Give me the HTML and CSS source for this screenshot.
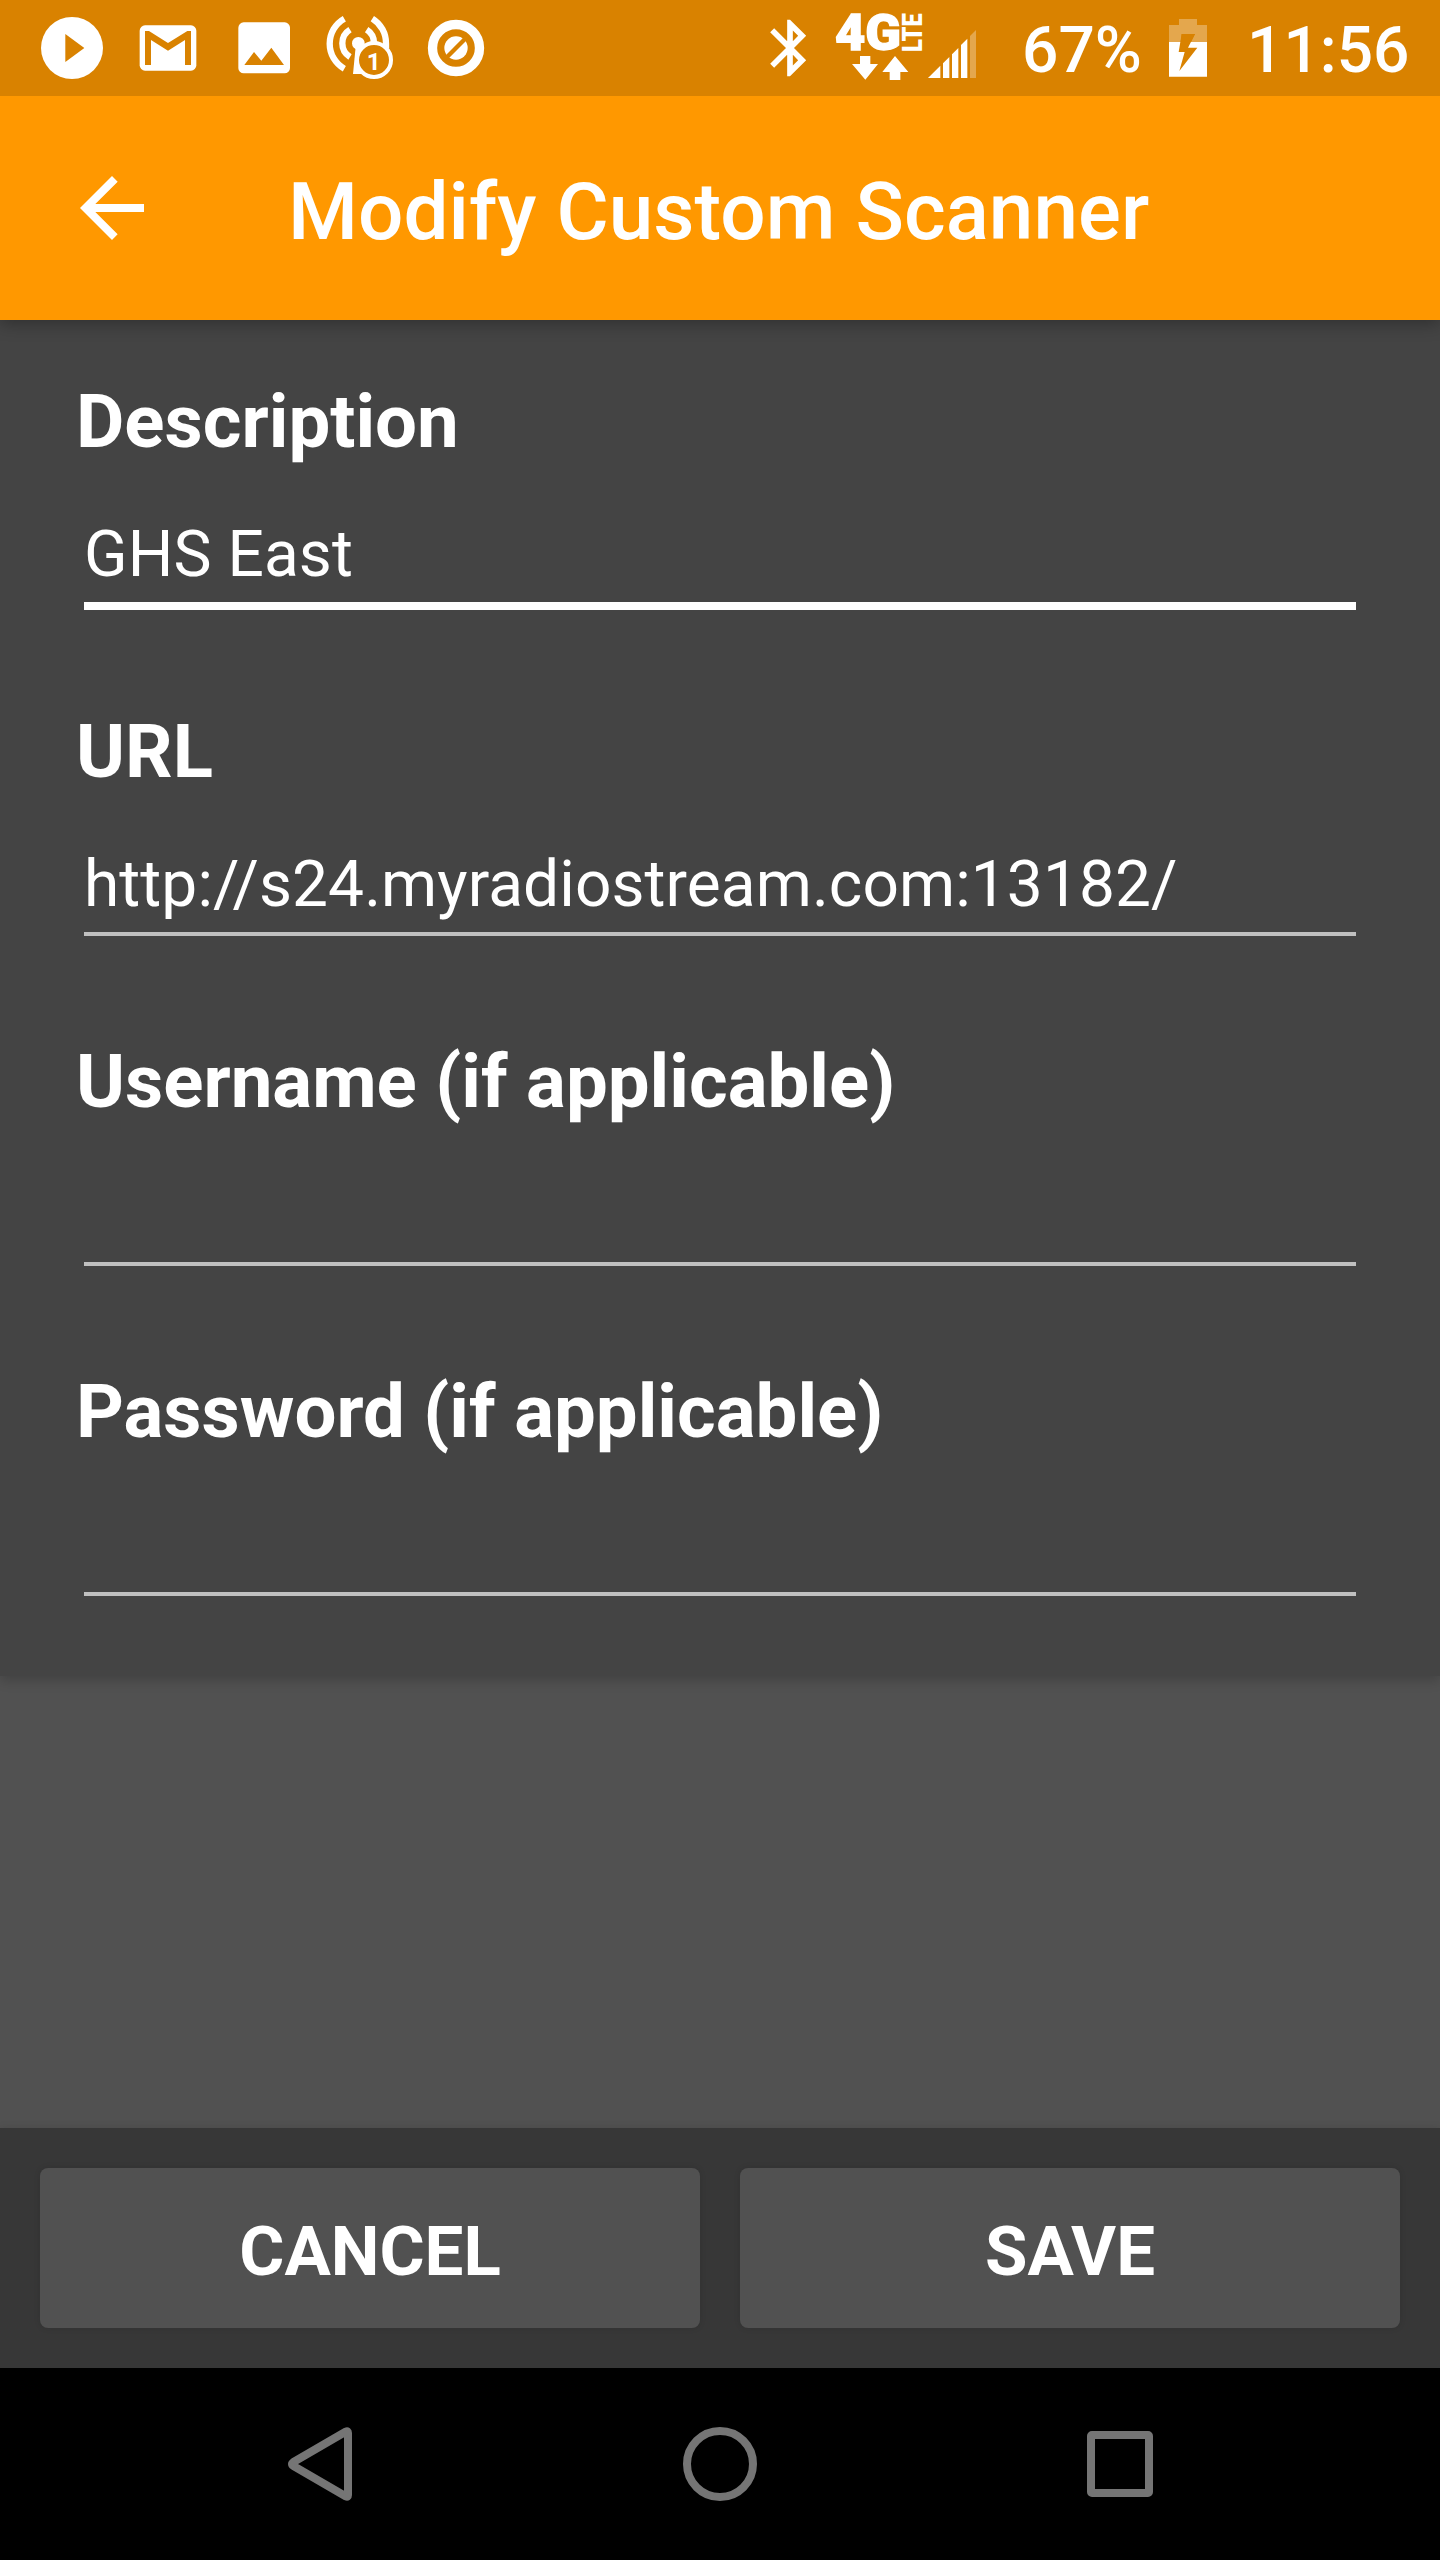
FILE: index.html
```
<!DOCTYPE html>
<html lang="en">
<head>
  <meta charset="UTF-8">
  <meta name="viewport" content="width=device-width, initial-scale=1.0">
  <title>Modify Custom Scanner</title>
  <link rel="stylesheet" href="styles.css">
</head>
<body>
  <div class="status-bar">
    <div class="notifications">
      <svg class="slot" viewBox="12 0 288 288">
        <circle cx="156" cy="144" r="93" fill="#fff"/>
        <path d="M136 102L193 144L136 186Z" fill="#d98200"/>
      </svg>
      <svg class="slot" viewBox="300 0 288 288">
        <rect x="359" y="76" width="170" height="136" rx="16" fill="#fff"/>
        <path d="M375 93H387L444 129L502 93H513V195H495V120L444 152L393 120V195H375Z" fill="#d98200"/>
      </svg>
      <svg class="slot" viewBox="588 0 288 288">
        <rect x="655" y="67" width="155" height="153" rx="16" fill="#fff"/>
        <path d="M673 195L702 156L724 182L754 143L792 195Z" fill="#d98200"/>
      </svg>
      <svg class="slot" viewBox="126 0 288 288">
        <g fill="none" stroke="#fff" stroke-width="19">
          <path d="M223 56A86 86 0 0 0 223 206"/>
          <path d="M307 56A86 86 0 0 1 348 131V145"/>
          <path d="M240 89A48 48 0 0 0 240 171"/>
          <path d="M290 89A48 48 0 0 1 312 128"/>
        </g>
        <circle cx="265" cy="130" r="19" fill="#fff"/>
        <path d="M257 140H275V222H249Z" fill="#fff"/>
        <circle cx="312" cy="180" r="51" fill="#d98200" stroke="#fff" stroke-width="12"/>
        <text class="badge" x="311" y="210" text-anchor="middle">1</text>
      </svg>
      <svg class="slot" viewBox="414 0 288 288">
        <circle cx="558" cy="144" r="70.5" fill="none" stroke="#fff" stroke-width="28"/>
        <circle cx="558" cy="144" r="35" fill="#fff"/>
        <path d="M526 176L590 112" stroke="#d98200" stroke-width="13"/>
      </svg>
    </div>
    <div class="system">
      <svg class="bluetooth" viewBox="0 0 24 24">
        <path fill="#fff" d="M17.71 7.71L12 2h-1v7.59L6.41 5 5 6.41 10.59 12 5 17.59 6.41 19 11 14.41V22h1l5.71-5.71-4.3-4.29 4.3-4.29zM13 5.83l1.88 1.88L13 9.59V5.83zm1.88 10.46L13 18.17v-3.76l1.88 1.88z"/>
      </svg>
      <svg class="network" viewBox="252 0 468 288" fill="#fff">
        <text class="net-type" x="285" y="150" textLength="198" lengthAdjust="spacingAndGlyphs">4G</text>
        <text class="net-lte" transform="translate(547 156) rotate(-90)" textLength="116" lengthAdjust="spacingAndGlyphs">LTE</text>
        <path d="M360 168H391V192H414L376 239L336 192H360Z"/>
        <path d="M465 168L505 216H481V240H449V216H427Z"/>
        <path d="M564 234L601 197V234ZM609 234V190L628 171V234ZM636 234V163L655 144V234ZM663 234V135L682 116V234Z"/>
        <path d="M690 234V108L708 90V234Z" opacity=".3"/>
      </svg>
      <span class="percent">67%</span>
      <svg class="battery" viewBox="567 0 114 288">
        <path d="M597 57H651V75H681V126H633L645 102H605L602 126H567V75H597Z" fill="#fff" opacity=".3"/>
        <path d="M567 126H681V230H567Z" fill="#fff"/>
        <path d="M605 102H645L624 143H652L598 213L614 156H596Z" fill="#d98200"/>
      </svg>
      <span class="clock">11:56</span>
    </div>
  </div>

  <header class="app-bar">
    <svg class="back" viewBox="0 0 24 24">
      <path fill="#fff" d="M20 11H7.83l5.59-5.59L12 4l-8 8 8 8 1.41-1.41L7.83 13H20v-2z"/>
    </svg>
    <h1>Modify Custom Scanner</h1>
  </header>

  <main>
    <form class="card">
      <div class="field">
        <label for="description">Description</label>
        <input class="focused" type="text" id="description" value="GHS East">
      </div>
      <div class="field">
        <label for="url">URL</label>
        <input type="text" id="url" value="http://s24.myradiostream.com:13182/">
      </div>
      <div class="field">
        <label for="username">Username (if applicable)</label>
        <input type="text" id="username">
      </div>
      <div class="field">
        <label for="password">Password (if applicable)</label>
        <input type="password" id="password">
      </div>
    </form>
  </main>

  <div class="actions">
    <button type="button">CANCEL</button>
    <button type="button">SAVE</button>
  </div>

  <nav class="nav-bar">
    <svg viewBox="0 0 96 96"><path d="M74 15.500Q76 14.500 76 17V79Q76 81.500 74 80.500L21.500 50Q18.500 48 21.500 46Z"/></svg>
    <svg viewBox="0 0 96 96"><circle cx="48" cy="48" r="33"/></svg>
    <svg viewBox="0 0 96 96"><rect x="19" y="19" width="58" height="58" rx="1"/></svg>
  </nav>
</body>
</html>
```
FILE: styles.css
```
* {
  box-sizing: border-box;
}
body {
  margin: 0;
  height: 2560px;
  display: flex;
  flex-direction: column;
  background-color: #515151;
  color: #fff;
  font-family: Roboto, sans-serif;
}
svg {
  display: block;
  flex: none;
}
.status-bar {
  height: 96px;
  padding: 0 33px 0 24px;
  display: flex;
  justify-content: space-between;
  background-color: #d98200;
  z-index: 2;
}
.notifications, .system {
  display: flex;
}
.slot {
  width: 96px;
  height: 96px;
}
.badge {
  font-size: 73px;
  font-weight: 700;
  fill: #fff;
}
.bluetooth {
  width: 68px;
  height: 68px;
  margin-top: 14px;
}
.network {
  width: 156px;
  height: 96px;
}
.net-type {
  font-size: 152px;
  font-weight: 900;
  stroke: #fff;
  stroke-width: 4;
}
.net-lte {
  font-size: 81px;
  font-weight: 900;
}
.percent, .clock {
  font-size: 64px;
  font-weight: 500;
  line-height: 102px;
  white-space: nowrap;
}
.percent {
  width: 147px;
  margin-left: 42px;
}
.battery {
  width: 38px;
  height: 96px;
}
.clock {
  width: 160px;
  margin-left: 40px;
}
.app-bar {
  height: 224px;
  padding-left: 64px;
  display: flex;
  align-items: center;
  gap: 128px;
  background-color: #ff9800;
  box-shadow: 0 4px 16px rgba(0, 0, 0, 0.3);
  z-index: 1;
}
.back {
  width: 96px;
  height: 96px;
}
h1 {
  margin: 0;
  padding-top: 7px;
  font-size: 80px;
  font-weight: 500;
  line-height: 94px;
  letter-spacing: 0.05px;
}
main {
  flex: 1;
}
.card {
  height: 1356px;
  padding: 56px 76px 0;
  background-color: #444;
  box-shadow: 0 4px 12px rgba(0, 0, 0, 0.2);
}
.field {
  height: 330px;
}
label {
  display: block;
  font-size: 74.4px;
  font-weight: 700;
  line-height: 92px;
}
input {
  display: block;
  width: 1272px;
  height: 100px;
  margin: 38px 8px 0;
  padding: 0;
  border: none;
  border-bottom: 4px solid #c0c0c0;
  outline: none;
  background: none;
  color: #fff;
  font-family: inherit;
  font-size: 64px;
  letter-spacing: 0.08px;
}
input.focused {
  height: 104px;
  border-bottom: 8px solid #fff;
}
.actions {
  height: 240px;
  padding: 40px;
  display: flex;
  gap: 40px;
  background-color: #373737;
  box-shadow: 0 0 8px rgba(0, 0, 0, 0.1);
}
button {
  flex: 1;
  padding: 6px 0 0;
  border: none;
  border-radius: 8px;
  background-color: #515151;
  box-shadow: 0 0 6px rgba(0, 0, 0, 0.12);
  color: #fff;
  font-family: inherit;
  font-size: 69px;
  font-weight: 700;
}
.nav-bar {
  height: 192px;
  display: flex;
  justify-content: center;
  align-items: center;
  gap: 304px;
  background-color: #000;
}
.nav-bar svg {
  width: 96px;
  height: 96px;
  fill: none;
  stroke: #757575;
  stroke-width: 8;
  stroke-linejoin: round;
}
```
